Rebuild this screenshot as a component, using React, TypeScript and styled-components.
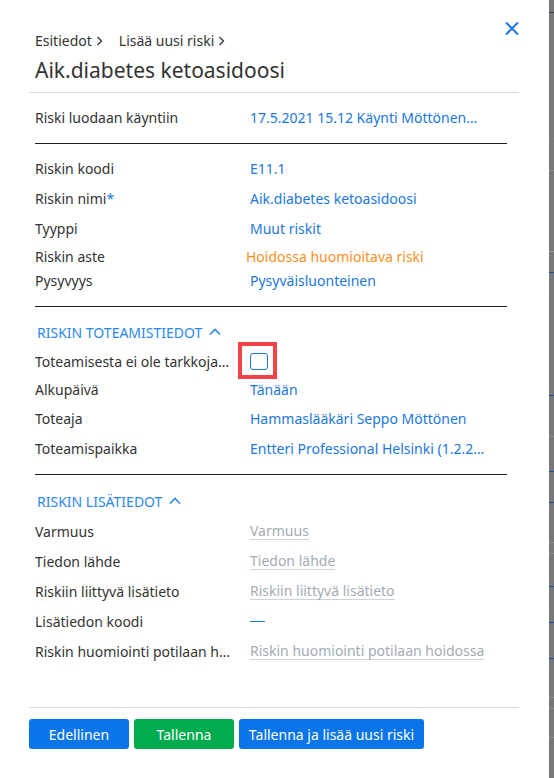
import React from "react";
import styled, { createGlobalStyle } from "styled-components";

const FONT = `"Noto Sans", "Open Sans", sans-serif`;

const GlobalStyle = createGlobalStyle`
  html, body { margin: 0; padding: 0; }
  body { background: #7a7a7a; font-family: ${FONT}; }
`;

const Screen = styled.div`
  display: flex;
  height: 778px;
  overflow: hidden;
`;

const Panel = styled.section`
  width: 549px;
  flex: none;
  background: #fff;
  color: #333;
  display: flex;
  flex-direction: column;
  font-size: 14px;
`;

const Header = styled.header`
  display: flex;
  justify-content: space-between;
  align-items: flex-start;
  padding: 31px 29px 0 35px;
`;

const Crumbs = styled.nav`
  display: flex;
  align-items: center;
  height: 20px;
  line-height: 20px;
  color: #333;
`;

const CrumbSep = styled.svg`
  width: 7px;
  height: 10px;
  margin: 0 16px 0 4px;
  flex: none;
`;

const Title = styled.h1`
  margin: 4px 0 0;
  font-size: 21px;
  line-height: 30px;
  font-weight: 400;
  color: #333;
`;

const CloseButton = styled.button`
  margin-top: -11px;
  width: 16px;
  height: 16px;
  padding: 0;
  border: 0;
  background: none;
  display: flex;
  align-items: center;
  justify-content: center;
  cursor: pointer;
`;

const Divider = styled.hr`
  margin: ${(p: { $top?: number }) => p.$top ?? 0}px 30px 0 29px;
  border: 0;
  height: 1px;
  background: #d6dce2;
`;

const Body = styled.div`
  flex: 1;
  padding: 0 42px 0 35px;
`;

const Section = styled.div<{ $pt: number; $pb: number; $rule?: boolean }>`
  padding: ${(p) => p.$pt}px 0 ${(p) => p.$pb}px;
  border-bottom: ${(p) => (p.$rule ? "1px solid #1f1f1f" : "0")};
`;

const SectionTitle = styled.button`
  display: flex;
  align-items: center;
  gap: 7px;
  height: 20px;
  padding: 0 0 0 2px;
  margin-bottom: ${(p: { $mb: number }) => p.$mb}px;
  border: 0;
  background: none;
  font: inherit;
  font-size: 14px;
  color: #2a89ee;
  text-transform: uppercase;
  cursor: pointer;
`;

const Row = styled.div<{ $h: number }>`
  display: grid;
  grid-template-columns: 215px 1fr;
  align-items: center;
  height: ${(p) => p.$h}px;
`;

const Label = styled.span`
  white-space: nowrap;
  overflow: hidden;
  color: #333;
`;

const Required = styled.span`
  color: #1b78dc;
`;

const Value = styled.span<{ $tone?: "link" | "warn" }>`
  white-space: nowrap;
  overflow: hidden;
  color: ${(p) => (p.$tone === "warn" ? "#f7901e" : "#1b78dc")};
  margin-left: ${(p) => (p.$tone === "warn" ? "-4px" : "0")};
`;

const Placeholder = styled.span`
  justify-self: start;
  line-height: 17px;
  color: #a3abb5;
  border-bottom: 1px solid #ccd3da;
  white-space: nowrap;
`;

const EmptyDash = styled.span`
  display: block;
  width: 15px;
  height: 1px;
  background: #1b78dc;
`;

const CheckWrap = styled.span`
  position: relative;
  justify-self: start;
  display: flex;
`;

const CheckBox = styled.span`
  width: 18px;
  height: 17px;
  box-sizing: border-box;
  border: 1.5px solid #1b78dc;
  border-radius: 3px;
  background: #fff;
`;

/* focus ring drawn over the checkbox */
const FocusRing = styled.span`
  position: absolute;
  left: -12px;
  top: -11px;
  width: 39px;
  height: 37px;
  box-sizing: border-box;
  border: 4px solid #f2434b;
`;

const Footer = styled.footer`
  display: flex;
  flex-direction: column;
`;

const ButtonRow = styled.div`
  display: flex;
  gap: 5px;
  padding: 11px 0 29px 29px;
`;

const Button = styled.button<{ $w: number; $kind?: "primary" | "success" }>`
  width: ${(p) => p.$w}px;
  height: 30px;
  border: 0;
  border-radius: 3px;
  font: inherit;
  font-size: 14px;
  color: #fff;
  background: ${(p) => (p.$kind === "success" ? "#00ab4f" : "#0a75e8")};
  cursor: pointer;
`;

/* the dimmed page peeking out to the right of the drawer */
const Backdrop = styled.div`
  flex: 1;
  display: flex;
  flex-direction: column;
  background: #787878;
  overflow: hidden;
`;

const BackdropBand = styled.div<{ $h: number; $line: string }>`
  flex: none;
  height: ${(p) => p.$h}px;
  border-bottom: 1px solid ${(p) => p.$line};
  box-sizing: border-box;
`;

const Chevron = ({ dir }: { dir: "right" | "up" }) =>
  dir === "right" ? (
    <CrumbSep viewBox="0 0 7 10">
      <polyline points="1.5,1 5.5,5 1.5,9" fill="none" stroke="#333" strokeWidth="1.3" />
    </CrumbSep>
  ) : (
    <svg width="12" height="8" viewBox="0 0 12 8">
      <polyline points="1,6.5 6,1.5 11,6.5" fill="none" stroke="#2a89ee" strokeWidth="1.6" />
    </svg>
  );

const bands: { h: number; line: string }[] = [
  { h: 13, line: "#3b3a55" },
  { h: 126, line: "#7f7f7f" },
  { h: 32, line: "#8c8c8c" },
  { h: 81, line: "#959595" },
  { h: 21, line: "#1e4f99" },
  { h: 62, line: "#787878" },
  { h: 61, line: "#1e4f99" },
  { h: 41, line: "#8c8c8c" },
  { h: 35, line: "#1e4f99" },
  { h: 31, line: "#1e4f99" },
  { h: 40, line: "#8c8c8c" },
  { h: 11, line: "#8c8c8c" },
  { h: 33, line: "#1e4f99" },
  { h: 36, line: "#1e4f99" },
  { h: 36, line: "#1e4f99" },
  { h: 39, line: "#8c8c8c" },
  { h: 11, line: "#8c8c8c" },
  { h: 29, line: "#8c8c8c" },
];

export default function App() {
  return (
    <>
      <GlobalStyle />
      <Screen>
        <Panel>
          <Header>
            <div>
              <Crumbs>
                Esitiedot
                <Chevron dir="right" />
                Lisää uusi riski
                <Chevron dir="right" />
              </Crumbs>
              <Title>Aik.diabetes ketoasidoosi</Title>
            </div>
            <CloseButton aria-label="Sulje">
              <svg width="14" height="13" viewBox="0 0 14 13">
                <path d="M1 0.5 L13 12.5 M13 0.5 L1 12.5" stroke="#1b78e6" strokeWidth="2" fill="none" />
              </svg>
            </CloseButton>
          </Header>
          <Divider $top={7} />

          <Body>
            <Section $pt={9} $pb={11} $rule>
              <Row $h={30}>
                <Label>Riski luodaan käyntiin</Label>
                <Value>17.5.2021 15.12 Käynti Möttönen…</Value>
              </Row>
            </Section>

            <Section $pt={9} $pb={15} $rule>
              <Row $h={30}>
                <Label>Riskin koodi</Label>
                <Value>E11.1</Value>
              </Row>
              <Row $h={30}>
                <Label>
                  Riskin nimi<Required>*</Required>
                </Label>
                <Value>Aik.diabetes ketoasidoosi</Value>
              </Row>
              <Row $h={30}>
                <Label>Tyyppi</Label>
                <Value>Muut riskit</Value>
              </Row>
              <Row $h={26}>
                <Label>Riskin aste</Label>
                <Value $tone="warn">Hoidossa huomioitava riski</Value>
              </Row>
              <Row $h={22}>
                <Label>Pysyvyys</Label>
                <Value>Pysyväisluonteinen</Value>
              </Row>
            </Section>

            <Section $pt={15} $pb={11} $rule>
              <SectionTitle $mb={4}>
                Riskin toteamistiedot
                <Chevron dir="up" />
              </SectionTitle>
              <Row $h={30}>
                <Label>Toteamisesta ei ole tarkkoja…</Label>
                <CheckWrap>
                  <CheckBox role="checkbox" aria-checked="false" />
                  <FocusRing />
                </CheckWrap>
              </Row>
              <Row $h={27}>
                <Label>Alkupäivä</Label>
                <Value>Tänään</Value>
              </Row>
              <Row $h={30}>
                <Label>Toteaja</Label>
                <Value>Hammaslääkäri Seppo Möttönen</Value>
              </Row>
              <Row $h={30}>
                <Label>Toteamispaikka</Label>
                <Value>Entteri Professional Helsinki (1.2.2…</Value>
              </Row>
            </Section>

            <Section $pt={16} $pb={0}>
              <SectionTitle $mb={5}>
                Riskin lisätiedot
                <Chevron dir="up" />
              </SectionTitle>
              <Row $h={30}>
                <Label>Varmuus</Label>
                <Placeholder>Varmuus</Placeholder>
              </Row>
              <Row $h={30}>
                <Label>Tiedon lähde</Label>
                <Placeholder>Tiedon lähde</Placeholder>
              </Row>
              <Row $h={30}>
                <Label>Riskiin liittyvä lisätieto</Label>
                <Placeholder>Riskiin liittyvä lisätieto</Placeholder>
              </Row>
              <Row $h={30}>
                <Label>Lisätiedon koodi</Label>
                <EmptyDash />
              </Row>
              <Row $h={30}>
                <Label>Riskin huomiointi potilaan h…</Label>
                <Placeholder>Riskin huomiointi potilaan hoidossa</Placeholder>
              </Row>
            </Section>
          </Body>

          <Footer>
            <Divider />
            <ButtonRow>
              <Button $w={100}>Edellinen</Button>
              <Button $w={100} $kind="success">
                Tallenna
              </Button>
              <Button $w={185}>Tallenna ja lisää uusi riski</Button>
            </ButtonRow>
          </Footer>
        </Panel>

        <Backdrop>
          {bands.map((b, i) => (
            <BackdropBand key={i} $h={b.h} $line={b.line} />
          ))}
        </Backdrop>
      </Screen>
    </>
  );
}
